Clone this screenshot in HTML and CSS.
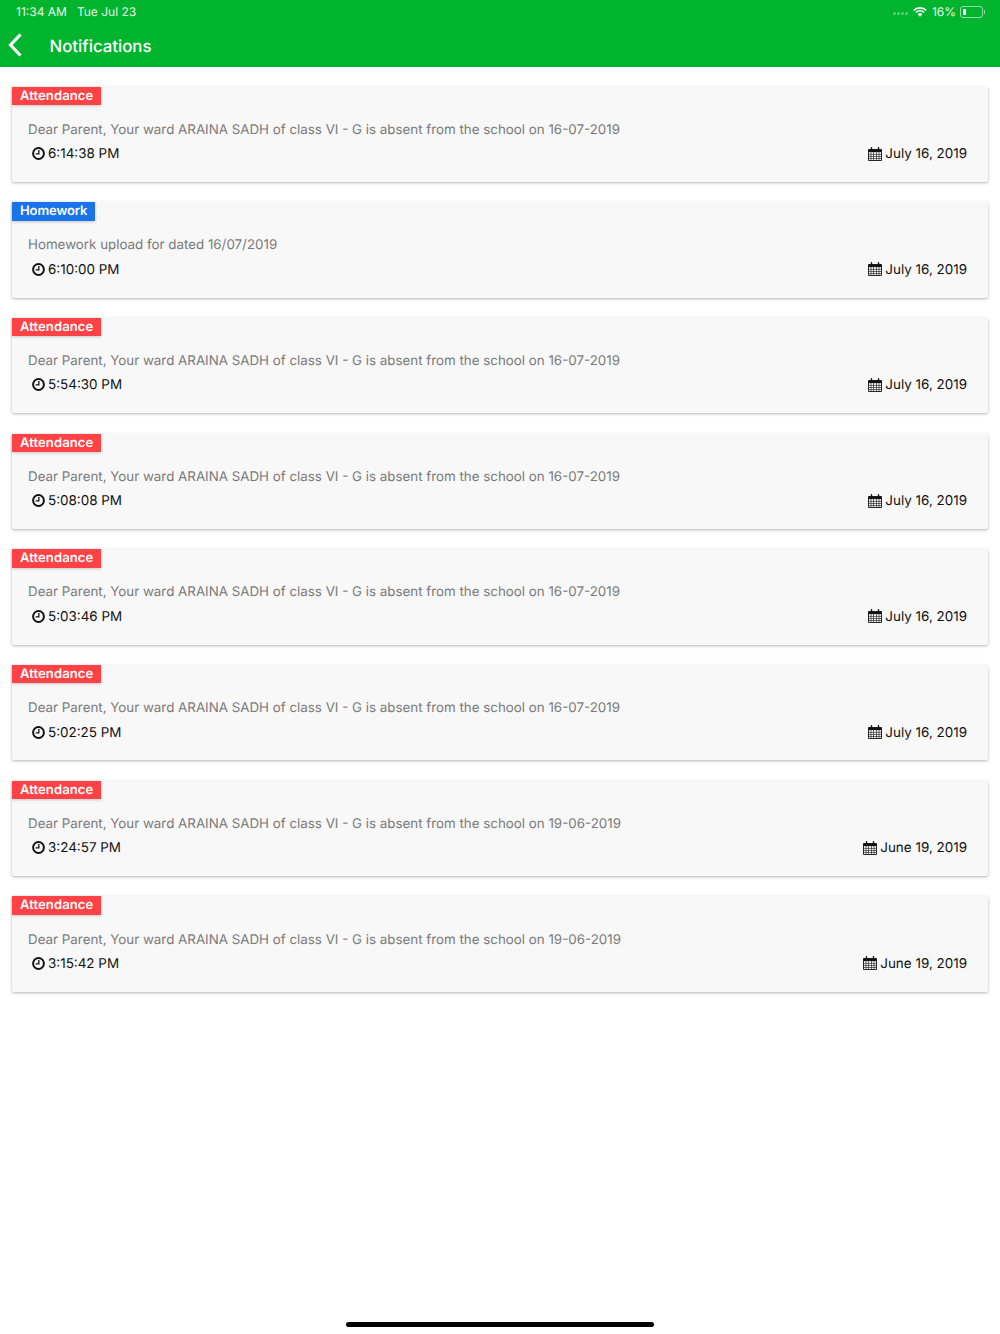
FILE: index.html
```html
<!DOCTYPE html>
<html>
<head>
    <title>Notifications</title>
    <link rel="stylesheet" href="styles.css">
</head>
<body>
    <svg class="icon-defs" width="0" height="0">
        <symbol id="clock" viewBox="0 0 12 12">
            <circle cx="6" cy="6" r="5" fill="none" stroke="currentColor" stroke-width="1.8"/>
            <path d="M6.3 2.8v3.6H3.4" fill="none" stroke="currentColor" stroke-width="1.2"/>
        </symbol>
        <symbol id="calendar" viewBox="0 0 14 14">
            <path d="M.5 2.5h13v11H.5z" fill="none" stroke="currentColor" stroke-width=".9"/>
            <path d="M.5 2.5h13v2.6H.5z" fill="currentColor"/>
            <path d="M.5 7.4h13M.5 9.5h13M.5 11.5h13M3 5v8.5M5.5 5v8.5M8.5 5v8.5M11 5v8.5" fill="none" stroke="currentColor" stroke-width=".6"/>
            <path d="M3.5.7v2.6M10.5.7v2.6" fill="none" stroke="currentColor" stroke-width="1.4" stroke-linecap="round"/>
        </symbol>
    </svg>

    <div class="header">
        <div class="status-bar">
            <span class="status-time">11:34 AM</span>
            <span>Tue Jul 23</span>
            <div class="status-right">
                <div class="signal"><i></i><i></i><i></i><i></i></div>
                <svg class="wifi" width="14" height="10" viewBox="0 0 14 10">
                    <path d="M.8 3.4a8.8 8.8 0 0 1 12.4 0M2.9 5.5a5.8 5.8 0 0 1 8.2 0" fill="none" stroke="#fff" stroke-width="1.6"/>
                    <path d="M4.8 7.2a3.1 3.1 0 0 1 4.4 0L7 9.8z" fill="#fff"/>
                </svg>
                <span>16%</span>
                <div class="battery"><div class="battery-level"></div></div>
                <div class="battery-tip"></div>
            </div>
        </div>
        <div class="title-bar">
            <svg class="back" width="16" height="26" viewBox="0 0 16 26">
                <path d="M13.5 2.5 3.5 13l10 10.5" fill="none" stroke="#fff" stroke-width="3.2"/>
            </svg>
            <h2>Notifications</h2>
        </div>
    </div>

    <div class="notice-list">
        <div class="notice">
            <div class="tag tag-attendance">Attendance</div>
            <div class="message">Dear Parent, Your ward ARAINA SADH of class VI - G is absent from the school on 16-07-2019</div>
            <div class="meta">
                <div class="meta-time"><svg class="clock"><use href="#clock"/></svg>6:14:38 PM</div>
                <div class="meta-date"><svg class="calendar"><use href="#calendar"/></svg>July 16, 2019</div>
            </div>
        </div>
        <div class="notice">
            <div class="tag tag-homework">Homework</div>
            <div class="message">Homework upload for dated 16/07/2019</div>
            <div class="meta">
                <div class="meta-time"><svg class="clock"><use href="#clock"/></svg>6:10:00 PM</div>
                <div class="meta-date"><svg class="calendar"><use href="#calendar"/></svg>July 16, 2019</div>
            </div>
        </div>
        <div class="notice">
            <div class="tag tag-attendance">Attendance</div>
            <div class="message">Dear Parent, Your ward ARAINA SADH of class VI - G is absent from the school on 16-07-2019</div>
            <div class="meta">
                <div class="meta-time"><svg class="clock"><use href="#clock"/></svg>5:54:30 PM</div>
                <div class="meta-date"><svg class="calendar"><use href="#calendar"/></svg>July 16, 2019</div>
            </div>
        </div>
        <div class="notice">
            <div class="tag tag-attendance">Attendance</div>
            <div class="message">Dear Parent, Your ward ARAINA SADH of class VI - G is absent from the school on 16-07-2019</div>
            <div class="meta">
                <div class="meta-time"><svg class="clock"><use href="#clock"/></svg>5:08:08 PM</div>
                <div class="meta-date"><svg class="calendar"><use href="#calendar"/></svg>July 16, 2019</div>
            </div>
        </div>
        <div class="notice">
            <div class="tag tag-attendance">Attendance</div>
            <div class="message">Dear Parent, Your ward ARAINA SADH of class VI - G is absent from the school on 16-07-2019</div>
            <div class="meta">
                <div class="meta-time"><svg class="clock"><use href="#clock"/></svg>5:03:46 PM</div>
                <div class="meta-date"><svg class="calendar"><use href="#calendar"/></svg>July 16, 2019</div>
            </div>
        </div>
        <div class="notice">
            <div class="tag tag-attendance">Attendance</div>
            <div class="message">Dear Parent, Your ward ARAINA SADH of class VI - G is absent from the school on 16-07-2019</div>
            <div class="meta">
                <div class="meta-time"><svg class="clock"><use href="#clock"/></svg>5:02:25 PM</div>
                <div class="meta-date"><svg class="calendar"><use href="#calendar"/></svg>July 16, 2019</div>
            </div>
        </div>
        <div class="notice">
            <div class="tag tag-attendance">Attendance</div>
            <div class="message">Dear Parent, Your ward ARAINA SADH of class VI - G is absent from the school on 19-06-2019</div>
            <div class="meta">
                <div class="meta-time"><svg class="clock"><use href="#clock"/></svg>3:24:57 PM</div>
                <div class="meta-date"><svg class="calendar"><use href="#calendar"/></svg>June 19, 2019</div>
            </div>
        </div>
        <div class="notice">
            <div class="tag tag-attendance">Attendance</div>
            <div class="message">Dear Parent, Your ward ARAINA SADH of class VI - G is absent from the school on 19-06-2019</div>
            <div class="meta">
                <div class="meta-time"><svg class="clock"><use href="#clock"/></svg>3:15:42 PM</div>
                <div class="meta-date"><svg class="calendar"><use href="#calendar"/></svg>June 19, 2019</div>
            </div>
        </div>
    </div>

    <div class="home-indicator"></div>
</body>
</html>
```

FILE: styles.css
```css
html, body {
    height: 100%;
}

body {
    font-family: Inter, "Liberation Sans", sans-serif;
    background: #ffffff;
    color: #111111;
    margin: 0;
    position: relative;
    overflow: hidden;
    text-rendering: geometricPrecision;
}

.icon-defs {
    display: block;
    height: 0;
}

.header {
    background: #00b52d;
    color: #ffffff;
    height: 67px;
}

.status-bar {
    display: flex;
    align-items: center;
    height: 23px;
    padding: 0 15px 0 16px;
    font-size: 12px;
    color: #e6f7ea;
}

.status-time {
    margin-right: 10px;
}

.status-right {
    margin-left: auto;
    display: flex;
    align-items: center;
}

.signal {
    display: flex;
    gap: 1px;
    margin: 4px 5px 0 0;
}

.signal i {
    width: 3px;
    height: 3px;
    border-radius: 50%;
    background: #5cd07a;
}

.wifi {
    margin-right: 5px;
}

.battery {
    width: 23px;
    height: 12px;
    margin-left: 4px;
    padding: 2px;
    border: 1px solid #8fe0a5;
    border-radius: 3px;
    box-sizing: border-box;
}

.battery-level {
    width: 3px;
    height: 100%;
    background: #ffffff;
    border-radius: 1px;
}

.battery-tip {
    width: 1px;
    height: 4px;
    margin-left: 1px;
    background: #8fe0a5;
}

.title-bar {
    display: flex;
    align-items: center;
    height: 44px;
}

.back {
    margin-left: 7px;
}

.title-bar h2 {
    margin: 3px 0 0 26.5px;
    font-size: 16.8px;
    font-weight: 500;
}

.notice-list {
    display: flex;
    flex-direction: column;
    gap: 20.2px;
    padding: 19.5px 12px 0;
}

.notice {
    background: #f8f8f8;
    height: 95.5px;
    border-radius: 2px;
    box-shadow: 0 1px 3px rgba(0, 0, 0, 0.3);
}

.tag {
    display: inline-block;
    height: 18.5px;
    padding: 0 8px;
    font-size: 13px;
    font-weight: 600;
    letter-spacing: 0.1px;
    line-height: 19.4px;
    color: #ffffff;
    vertical-align: top;
    box-shadow: 0 1px 3px rgba(0, 0, 0, 0.2);
}

.tag-attendance {
    background: #ff4245;
}

.tag-homework {
    background: #1a73e8;
    letter-spacing: -0.1px;
}

.message {
    margin-top: 13.2px;
    padding-left: 16px;
    font-size: 13.35px;
    line-height: 20px;
    color: #7a7a7a;
}

.meta {
    display: flex;
    justify-content: space-between;
    margin-top: 4.4px;
    padding: 0 21px 0 20px;
    font-size: 13.45px;
    line-height: 20px;
}

.meta-time,
.meta-date {
    display: flex;
    align-items: center;
}

.clock {
    width: 13px;
    height: 13px;
    margin: -1px 3px 0 0;
}

.calendar {
    width: 14px;
    height: 14px;
    margin: -1px 3px 0 0;
}

.home-indicator {
    position: absolute;
    left: 346px;
    top: 1322px;
    width: 308px;
    height: 5px;
    border-radius: 3px;
    background: #000000;
}
```
